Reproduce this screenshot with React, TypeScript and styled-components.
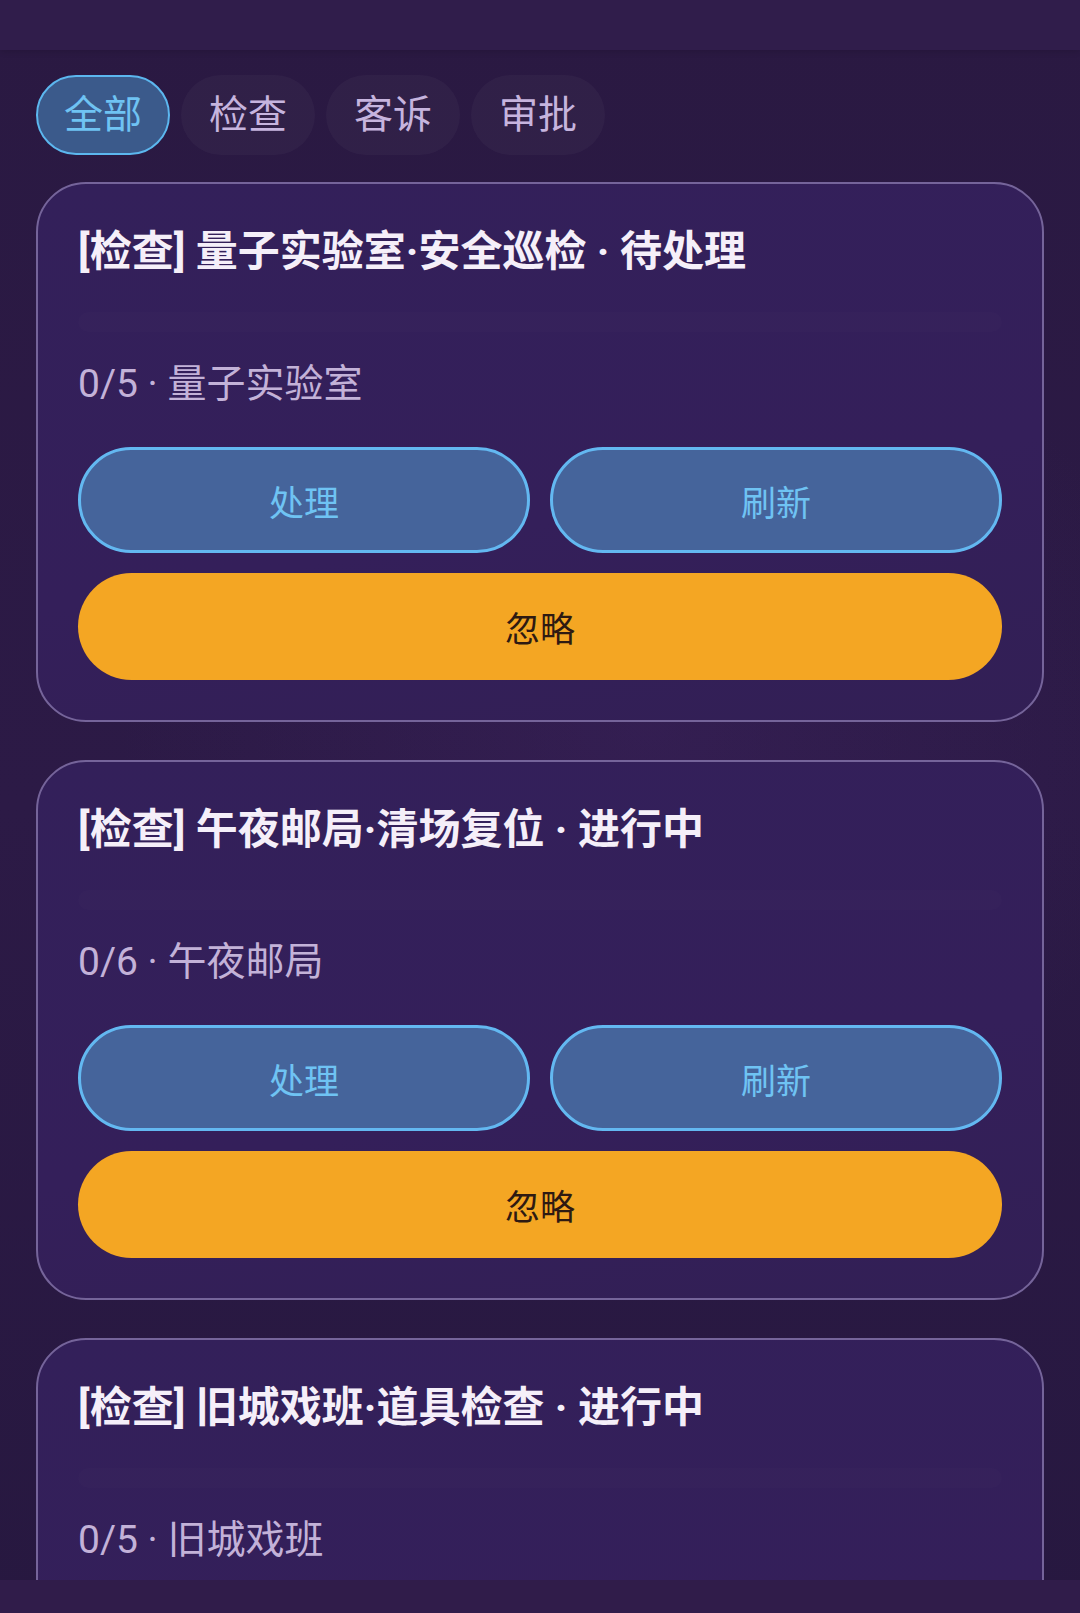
import React, { useState } from 'react';
import styled, { createGlobalStyle } from 'styled-components';

const GlobalStyle = createGlobalStyle`
  html, body {
    margin: 0;
    padding: 0;
    background: #2a1942;
  }
  * {
    box-sizing: border-box;
  }
`;

type Task = {
  id: number;
  kind: string;
  title: string;
  status: string;
  done: number;
  total: number;
  place: string;
};

const tasks: Task[] = [
  { id: 1, kind: '检查', title: '量子实验室·安全巡检', status: '待处理', done: 0, total: 5, place: '量子实验室' },
  { id: 2, kind: '检查', title: '午夜邮局·清场复位', status: '进行中', done: 0, total: 6, place: '午夜邮局' },
  { id: 3, kind: '检查', title: '旧城戏班·道具检查', status: '进行中', done: 0, total: 5, place: '旧城戏班' },
];

const tabs = ['全部', '检查', '客诉', '审批'];

const App = () => {
  const [active, setActive] = useState(0);

  return (
    <Page>
      <GlobalStyle />
      <TopBar />
      <Main>
        <TabRow>
          {tabs.map((t, i) => (
            <Tab key={t} $active={i === active} onClick={() => setActive(i)}>
              {t}
            </Tab>
          ))}
        </TabRow>
        <CardList>
          {tasks.map((task) => (
            <Card key={task.id}>
              <Title>
                [{task.kind}] {task.title} · {task.status}
              </Title>
              <Track>
                <Fill style={{ width: `${(task.done / task.total) * 100}%` }} />
              </Track>
              <Meta>
                {task.done}/{task.total} · {task.place}
              </Meta>
              <ButtonRow>
                <BlueButton>处理</BlueButton>
                <BlueButton>刷新</BlueButton>
              </ButtonRow>
              <IgnoreButton>忽略</IgnoreButton>
            </Card>
          ))}
        </CardList>
      </Main>
      <BottomBar />
    </Page>
  );
};

const Page = styled.div`
  position: relative;
  height: 100vh;
  overflow: hidden;
  display: flex;
  flex-direction: column;
  font-family: Roboto, "Noto Sans CJK SC", sans-serif;
  background:
    radial-gradient(ellipse 70% 40% at 60% 45%, rgba(70, 40, 110, 0.3), transparent 70%),
    linear-gradient(180deg, #2a1942 0%, #2c1a46 50%, #271840 100%);
`;

const TopBar = styled.header`
  flex: 0 0 50px;
  background: #301d4b;
  box-shadow: 0 2px 6px rgba(0, 0, 0, 0.12);
`;

/* the list is cut off by the bottom bar, like a scrolled view */
const Main = styled.main`
  flex: 1;
  min-height: 0;
  overflow: hidden;
  padding: 25px 36px 0;
  margin-bottom: 33px;
`;

const TabRow = styled.nav`
  display: flex;
  gap: 11px;
`;

const Tab = styled.button<{ $active: boolean }>`
  height: 80px;
  padding: 0 26px;
  border-radius: 40px;
  font-family: inherit;
  font-size: 39px;
  line-height: 1;
  cursor: pointer;
  border: 2.5px solid ${(p) => (p.$active ? '#5cb7ef' : 'transparent')};
  background: ${(p) => (p.$active ? '#3b5a8b' : 'rgba(255, 255, 255, 0.03)')};
  color: ${(p) => (p.$active ? '#6fc3f3' : '#c6b4de')};
`;

const CardList = styled.section`
  display: flex;
  flex-direction: column;
  gap: 38px;
  margin-top: 27px;
`;

const Card = styled.article`
  display: flex;
  flex-direction: column;
  padding: 40px;
  border: 2px solid #75649a;
  border-radius: 50px;
  background: linear-gradient(170deg, #33205a 0%, #341f5a 60%, #321f55 100%);
`;

const Title = styled.h2`
  margin: 0;
  font-size: 42px;
  line-height: 56px;
  font-weight: 700;
  color: #f5eff9;
`;

const Track = styled.div`
  height: 20px;
  margin-top: 32px;
  border-radius: 10px;
  background: rgba(255, 255, 255, 0.012);
  overflow: hidden;
`;

const Fill = styled.div`
  height: 100%;
  background: #5cb7ef;
`;

const Meta = styled.div`
  margin-top: 26px;
  font-size: 39px;
  line-height: 53px;
  color: #c3b2d8;
`;

const ButtonRow = styled.div`
  display: grid;
  grid-template-columns: 1fr 1fr;
  gap: 20px;
  margin-top: 36px;
`;

const BlueButton = styled.button`
  height: 106px;
  border-radius: 53px;
  border: 3px solid #63b8f1;
  background: #45649b;
  color: #6fc3f3;
  font-family: inherit;
  font-size: 35px;
  cursor: pointer;
`;

const IgnoreButton = styled.button`
  height: 107px;
  margin-top: 20px;
  border-radius: 54px;
  border: none;
  background: #f4a623;
  color: #2e1a12;
  font-family: inherit;
  font-size: 35px;
  cursor: pointer;
`;

const BottomBar = styled.footer`
  position: absolute;
  left: 0;
  right: 0;
  bottom: 0;
  height: 33px;
  background: #301c4a;
`;

export default App;
